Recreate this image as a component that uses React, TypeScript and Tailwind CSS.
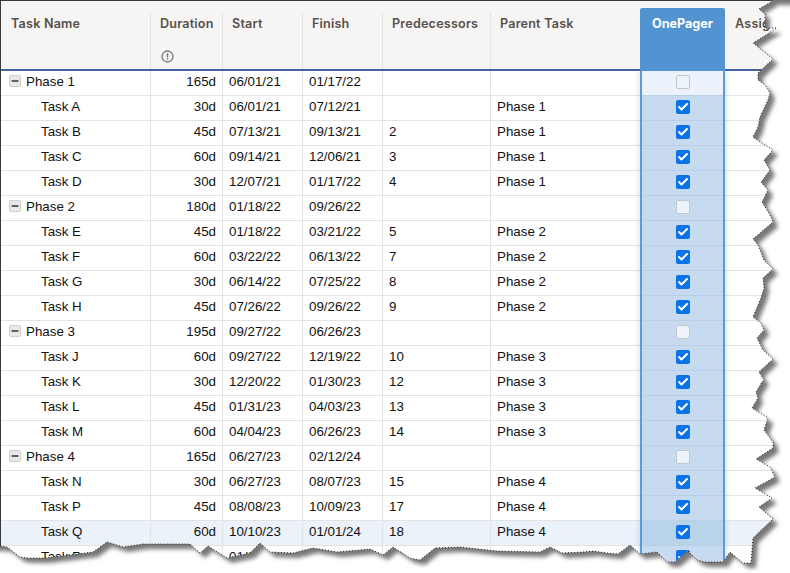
import { Check, Minus } from "lucide-react";

type Row = {
  name: string;
  dur: string;
  start: string;
  finish: string;
  pred?: string;
  parent?: string;
  phase?: boolean;
  hover?: boolean;
};

const rows: Row[] = [
  { name: "Phase 1", dur: "165d", start: "06/01/21", finish: "01/17/22", phase: true },
  { name: "Task A", dur: "30d", start: "06/01/21", finish: "07/12/21", parent: "Phase 1" },
  { name: "Task B", dur: "45d", start: "07/13/21", finish: "09/13/21", pred: "2", parent: "Phase 1" },
  { name: "Task C", dur: "60d", start: "09/14/21", finish: "12/06/21", pred: "3", parent: "Phase 1" },
  { name: "Task D", dur: "30d", start: "12/07/21", finish: "01/17/22", pred: "4", parent: "Phase 1" },
  { name: "Phase 2", dur: "180d", start: "01/18/22", finish: "09/26/22", phase: true },
  { name: "Task E", dur: "45d", start: "01/18/22", finish: "03/21/22", pred: "5", parent: "Phase 2" },
  { name: "Task F", dur: "60d", start: "03/22/22", finish: "06/13/22", pred: "7", parent: "Phase 2" },
  { name: "Task G", dur: "30d", start: "06/14/22", finish: "07/25/22", pred: "8", parent: "Phase 2" },
  { name: "Task H", dur: "45d", start: "07/26/22", finish: "09/26/22", pred: "9", parent: "Phase 2" },
  { name: "Phase 3", dur: "195d", start: "09/27/22", finish: "06/26/23", phase: true },
  { name: "Task J", dur: "60d", start: "09/27/22", finish: "12/19/22", pred: "10", parent: "Phase 3" },
  { name: "Task K", dur: "30d", start: "12/20/22", finish: "01/30/23", pred: "12", parent: "Phase 3" },
  { name: "Task L", dur: "45d", start: "01/31/23", finish: "04/03/23", pred: "13", parent: "Phase 3" },
  { name: "Task M", dur: "60d", start: "04/04/23", finish: "06/26/23", pred: "14", parent: "Phase 3" },
  { name: "Phase 4", dur: "165d", start: "06/27/23", finish: "02/12/24", phase: true },
  { name: "Task N", dur: "30d", start: "06/27/23", finish: "08/07/23", pred: "15", parent: "Phase 4" },
  { name: "Task P", dur: "45d", start: "08/08/23", finish: "10/09/23", pred: "17", parent: "Phase 4" },
  { name: "Task Q", dur: "60d", start: "10/10/23", finish: "01/01/24", pred: "18", parent: "Phase 4", hover: true },
  { name: "Task R", dur: "30d", start: "01/02/24", finish: "02/12/24", pred: "19", parent: "Phase 4" },
];

// torn paper edge, traced clockwise from top right round to the left side
const tear: [number, number][] = [
  [790, 0], [772, 0], [771, 2], [759, 9], [765, 14], [765, 28], [777, 28], [753, 43], [773, 59], [758, 73], [758, 80], [765, 85],
  [770, 93], [768, 100], [760, 117], [758, 127], [753, 137], [760, 142], [773, 150], [764, 160], [770, 170],
  [761, 182], [768, 190], [762, 202], [770, 215], [773, 222], [753, 239], [758, 245], [764, 260], [773, 269],
  [763, 278], [764, 288], [761, 298], [758, 305], [753, 317], [761, 323], [764, 330], [757, 338], [763, 350],
  [773, 359], [759, 372], [764, 380], [762, 382], [756, 392], [758, 398], [752, 408], [768, 418], [764, 430],
  [773, 442], [773, 448], [756, 459], [770, 467], [775, 477], [755, 488], [772, 498], [759, 507], [773, 519],
  [753, 538], [751, 563], [743, 563], [730, 552], [723, 562], [705, 562], [697, 560], [688, 551], [675, 562],
  [667, 562], [657, 552], [640, 554], [630, 545], [618, 554], [607, 553], [593, 551], [583, 552], [562, 553],
  [550, 547], [540, 552], [497, 551], [460, 547], [435, 548], [420, 560], [410, 558], [393, 547], [383, 555],
  [370, 549], [360, 550], [337, 552], [313, 548], [293, 553], [270, 552], [260, 543], [250, 553], [227, 558],
  [208, 546], [200, 553], [190, 544], [143, 544], [123, 547], [107, 542], [93, 552], [45, 558], [28, 558],
  [20, 557], [7, 547], [0, 546], [-20, 546], [-20, -20], [790, -20],
];
const tearPath = "M" + tear.map(([x, y]) => `${x} ${y}`).join("L") + "Z";
const edgePath = "M" + tear.slice(1, -3).map(([x, y]) => `${x} ${y}`).join("L");
const pagePath = "M-40 -40H830V613H-40Z";

function TornEdge() {
  return (
    <svg className="absolute inset-0 z-20 h-[573px] w-[790px]" viewBox="0 0 790 573">
      <defs>
        <filter id="blur" x="-5%" y="-5%" width="110%" height="110%">
          <feGaussianBlur stdDeviation="2" />
        </filter>
        <clipPath id="outside">
          <path d={pagePath + tearPath} clipRule="evenodd" />
        </clipPath>
      </defs>
      <path d={pagePath + tearPath} fillRule="evenodd" fill="#ffffff" />
      <g clipPath="url(#outside)">
        <path d={tearPath} transform="translate(5 5)" fill="#777777" filter="url(#blur)" />
      </g>
      <path d={edgePath} fill="none" stroke="#222222" strokeWidth="1" strokeDasharray="1 2" />
    </svg>
  );
}

function Box({ on }: { on: boolean }) {
  if (on) {
    return (
      <span className="grid h-[14px] w-[14px] place-items-center rounded-[2px] bg-[#0a73e8]">
        <Check className="h-3 w-3 text-white" strokeWidth={4} />
      </span>
    );
  }
  return <span className="h-[14px] w-[14px] rounded-[2px] border border-[#bfc7d1] bg-[#eef3fa]" />;
}

const headText = "pt-[3px] text-[12.6px] leading-[18px] font-semibold tracking-[0.2px] text-[#55504c]";

function Head({ w, label }: { w: string; label: string }) {
  return <div className={`${w} mt-[11px] shrink-0 border-r border-[#e3e3e3] pl-[9px] ${headText}`}>{label}</div>;
}

function Cell({ w, children, right }: { w: string; children?: string; right?: boolean }) {
  return (
    <div className={`${w} shrink-0 border-r border-[#e3e3e3] pl-[6px] leading-[21px] ${right ? "pr-[6px] text-right" : ""}`}>
      {children}
    </div>
  );
}

export default function App() {
  return (
    <div className="relative h-[573px] w-[790px] overflow-hidden bg-white font-['Liberation_Sans',sans-serif] text-[13.33px] text-[#111111]">
      <div className="h-full border-t border-l border-[#3a3a3a]">
        {/* header */}
        <div className="flex h-[70px] border-b-2 border-[#45619c] bg-[#f6f5f3] font-['Inter',sans-serif]">
          <div className={`mt-[11px] w-[150px] shrink-0 border-r border-[#e3e3e3] pl-[10px] ${headText}`}>Task Name</div>
          <div className={`mt-[11px] flex w-[72px] shrink-0 flex-col border-r border-[#e3e3e3] pl-[9px] ${headText}`}>
            Duration
            <svg className="mt-[17px] ml-[1px] h-[13px] w-[13px]" viewBox="0 0 13 13" fill="none">
              <circle cx="6.5" cy="6.5" r="5.5" stroke="#777777" strokeWidth="1.3" />
              <path d="M6.5 3.2V7.4" stroke="#777777" strokeWidth="1.5" />
              <path d="M6.5 8.4V9.8" stroke="#777777" strokeWidth="1.5" />
            </svg>
          </div>
          <Head w="w-[80px]" label="Start" />
          <Head w="w-[80px]" label="Finish" />
          <Head w="w-[108px]" label="Predecessors" />
          <div className={`mt-[11px] w-[149px] shrink-0 pl-[9px] ${headText}`}>Parent Task</div>
          <div className="z-10 mt-[7px] -mb-[2px] w-[85px] shrink-0 rounded-t-[2px] bg-[#5294d2] pt-[7px] text-center text-[12.6px] leading-[18px] font-bold text-white">
            OnePager
          </div>
          <div className={`mt-[11px] pl-[10px] whitespace-nowrap ${headText}`}>Assign</div>
        </div>

        {/* soft glow around the highlighted column */}
        <div className="absolute top-[71px] left-[640px] z-[5] h-[502px] w-[85px] shadow-[0_0_6px_rgba(82,148,210,0.35)]" />

        {/* rows */}
        {rows.map((r) => (
          <div key={r.name} className={`flex h-[25px] border-b border-[#e3e3e3] ${r.hover ? "bg-[#ebf2fa]" : ""}`}>
            <div className={`flex w-[150px] shrink-0 items-start border-r border-[#e3e3e3] ${r.phase ? "pl-[8px]" : "pl-[40px]"}`}>
              {r.phase && (
                <span className="mt-[4px] mr-[5px] grid h-[12px] w-[12px] place-items-center rounded-[2px] border border-[#cfcfcf] bg-[#e8e8e8]">
                  <Minus className="h-[10px] w-[10px] text-[#333333]" strokeWidth={3.5} />
                </span>
              )}
              <span className="leading-[21px]">{r.name}</span>
            </div>
            <Cell w="w-[72px]" right>{r.dur}</Cell>
            <Cell w="w-[80px]">{r.start}</Cell>
            <Cell w="w-[80px]">{r.finish}</Cell>
            <Cell w="w-[108px]">{r.pred}</Cell>
            <div className="w-[149px] shrink-0 pl-[6px] leading-[21px]">{r.parent}</div>
            <div
              className={`z-10 -mb-px grid w-[85px] shrink-0 place-items-center border-x-[2px] border-[#5a9bdc] ${
                r.hover ? "bg-[#b9d3ea]" : r.name === "Phase 1" ? "bg-[#ebf2fb]" : "bg-[#c6dbf0]"
              }`}
            >
              <div className="grid h-full w-full place-items-center border-b border-[#b9cfe6] pb-[2px]">
                <Box on={!r.phase} />
              </div>
            </div>
          </div>
        ))}
      </div>
      <TornEdge />
    </div>
  );
}
